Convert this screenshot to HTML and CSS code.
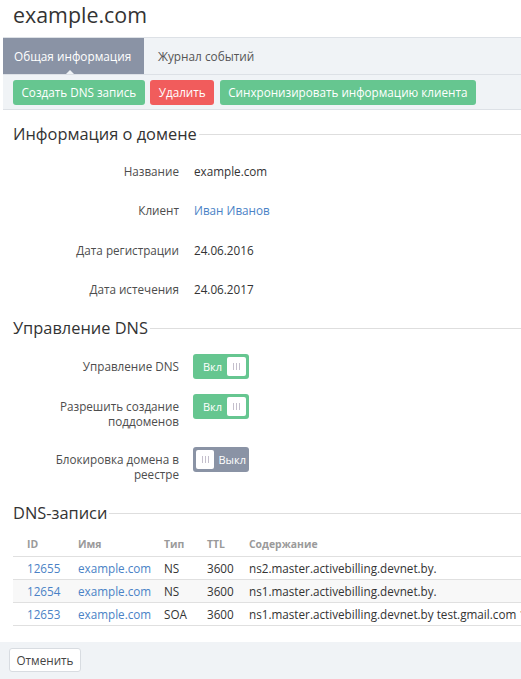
FILE: index.html
```html
<!DOCTYPE html>
<html lang="ru">
<head>
<meta charset="utf-8">
<title>example.com</title>
<link rel="stylesheet" href="styles.css">
</head>
<body>
<div class="page">
  <h1 class="page-title">example.com</h1>

  <div class="tabs">
    <div class="tab tab-active">Общая информация</div>
    <div class="tab">Журнал событий</div>
  </div>

  <div class="toolbar">
    <button class="btn btn-green">Создать DNS запись</button>
    <button class="btn btn-red">Удалить</button>
    <button class="btn btn-green">Синхронизировать информацию клиента</button>
  </div>

  <section class="section section-info">
    <h2 class="section-title"><span>Информация о домене</span></h2>
    <div class="field">
      <div class="field-label">Название</div>
      <div class="field-value">example.com</div>
    </div>
    <div class="field">
      <div class="field-label">Клиент</div>
      <div class="field-value"><a class="link" href="#">Иван Иванов</a></div>
    </div>
    <div class="field">
      <div class="field-label">Дата регистрации</div>
      <div class="field-value">24.06.2016</div>
    </div>
    <div class="field">
      <div class="field-label">Дата истечения</div>
      <div class="field-value">24.06.2017</div>
    </div>
  </section>

  <section class="section section-dns">
    <h2 class="section-title"><span>Управление DNS</span></h2>
    <div class="field">
      <div class="field-label">Управление DNS</div>
      <div class="switch switch-on"><span class="switch-text">Вкл</span><span class="knob"><i></i><i></i><i></i></span></div>
    </div>
    <div class="field">
      <div class="field-label">Разрешить создание<br>поддоменов</div>
      <div class="switch switch-on"><span class="switch-text">Вкл</span><span class="knob"><i></i><i></i><i></i></span></div>
    </div>
    <div class="field">
      <div class="field-label">Блокировка домена в<br>реестре</div>
      <div class="switch switch-off"><span class="knob"><i></i><i></i><i></i></span><span class="switch-text">Выкл</span></div>
    </div>
  </section>

  <section class="section section-records">
    <h2 class="section-title"><span>DNS-записи</span></h2>
    <div class="table-wrap">
      <table class="records">
        <colgroup>
          <col class="c-id"><col class="c-name"><col class="c-type"><col class="c-ttl"><col>
        </colgroup>
        <thead>
          <tr><th>ID</th><th>Имя</th><th>Тип</th><th>TTL</th><th>Содержание</th></tr>
        </thead>
        <tbody>
          <tr><td><a class="link" href="#">12655</a></td><td><a class="link" href="#">example.com</a></td><td>NS</td><td>3600</td><td>ns2.master.activebilling.devnet.by.</td></tr>
          <tr class="striped"><td><a class="link" href="#">12654</a></td><td><a class="link" href="#">example.com</a></td><td>NS</td><td>3600</td><td>ns1.master.activebilling.devnet.by.</td></tr>
          <tr><td><a class="link" href="#">12653</a></td><td><a class="link" href="#">example.com</a></td><td>SOA</td><td>3600</td><td>ns1.master.activebilling.devnet.by test.gmail.com 1466755200 10800 3600 604800 3600</td></tr>
        </tbody>
      </table>
    </div>
  </section>

  <div class="footer">
    <button class="btn btn-plain">Отменить</button>
  </div>
</div>
</body>
</html>
```

FILE: styles.css
```css
* {
  box-sizing: border-box;
}

html, body {
  margin: 0;
  padding: 0;
  background: #fff;
  overflow: hidden;
}

body {
  font-family: "Open Sans", "DejaVu Sans", sans-serif;
  font-size: 11.7px;
  color: #333;
}

.page {
  width: 521px;
  overflow: hidden;
}

.page-title {
  margin: 0 0 7px;
  padding-left: 13px;
  font-size: 21.4px;
  font-weight: 400;
  line-height: 30px;
  color: #333;
}

/* tab strip */
.tabs {
  margin-left: 3px;
  display: flex;
  height: 37px;
  background: #f0f3f6;
  border-top: 1px solid #dde1e6;
}

.tab {
  padding: 0 14px;
  line-height: 36px;
  font-size: 11.8px;
  color: #555;
  white-space: nowrap;
}

.tab-active {
  position: relative;
  width: 141px;
  padding-left: 11px;
  background: #8a93a5;
  color: #fff;
}

.tab-active::after {
  content: "";
  position: absolute;
  left: 63px;
  bottom: 0;
  border-left: 4px solid transparent;
  border-right: 4px solid transparent;
  border-bottom: 4px solid #f0f3f6;
}

.toolbar {
  margin-left: 3px;
  display: flex;
  gap: 5.5px;
  padding: 5px 10px 4px;
  background: #f0f3f6;
  border-top: 1px solid #dde1e6;
  border-bottom: 1px solid #dde1e6;
}

.btn {
  height: 25px;
  padding: 0 8.5px;
  border: 0;
  border-radius: 3px;
  font-family: inherit;
  font-size: 11.7px;
  line-height: 25px;
  color: #fff;
  white-space: nowrap;
  cursor: pointer;
}

.btn-green {
  background: #66c690;
}

.btn-red {
  background: #f15c5c;
}

.btn-plain {
  height: 24px;
  width: 72px;
  padding: 0;
  background: #fff;
  border: 1px solid #d8dce1;
  color: #444;
  line-height: 22px;
}

/* sections */
.section {
  padding: 0 0 0 13px;
}

.section-title {
  display: flex;
  align-items: center;
  margin: 0 0 14px;
  font-size: 16.4px;
  font-weight: 400;
  line-height: 22px;
  color: #333;
}

.section-info .section-title {
  margin-top: 13px;
}

.section-records .section-title {
  margin-top: 17px;
  margin-bottom: 9px;
}

.section-title::after {
  content: "";
  flex: 1;
  height: 1px;
  margin-left: 2px;
  background: #dedede;
}

.field {
  display: flex;
  align-items: flex-start;
  gap: 15px;
  min-height: 25px;
  margin-bottom: 14.5px;
}

.section-dns .field {
  margin-bottom: 15px;
}

.section-dns .section-title {
  margin-bottom: 15px;
}

.field-label {
  width: 166px;
  padding: 4.5px 0 3.5px;
  line-height: 15px;
  text-align: right;
  color: #4d4d4d;
}

.field-value {
  padding: 4.5px 0 3.5px;
  line-height: 15px;
  color: #333;
}

.link {
  color: #4a82c6;
  text-decoration: none;
}

/* on/off switch */
.switch {
  display: flex;
  align-items: center;
  width: 56px;
  height: 25px;
  padding: 3px;
  border-radius: 3px;
  color: #fff;
  font-size: 11px;
}

.switch-on {
  margin-left: -1px;
  background: #66c690;
  justify-content: space-between;
  padding-left: 10px;
}

.switch-off {
  margin-left: -1px;
  background: #8a93a5;
  gap: 4px;
}

.knob {
  display: flex;
  align-items: center;
  justify-content: center;
  gap: 2px;
  width: 19px;
  height: 19px;
  background: #fff;
  border-radius: 2px;
}

.knob i {
  display: block;
  width: 1px;
  height: 7px;
  background: #c4bfcc;
}

/* records table */
.table-wrap {
  overflow: hidden;
  margin-bottom: 16px;
}

.records {
  width: 700px;
  table-layout: fixed;
  border-collapse: collapse;
  white-space: nowrap;
}

.c-id { width: 58px; }
.c-name { width: 86px; }
.c-type { width: 43px; }
.c-ttl { width: 42px; }

.records th,
.records td {
  padding: 0 7px;
  text-align: left;
  overflow: hidden;
}

.records th:first-child,
.records td:first-child {
  padding-left: 14px;
}

.records th {
  height: 23px;
  font-size: 10.4px;
  font-weight: 700;
  color: #9a9a9a;
  border-bottom: 1px solid #e0e0e0;
}

.records td {
  height: 23px;
  line-height: 22px;
  color: #333;
  border-bottom: 1px solid #e0e0e0;
}

.records tr.striped td {
  background: #f8f8f8;
}

.footer {
  padding: 6px 9px 8px;
  background: #f0f3f6;
}
```
